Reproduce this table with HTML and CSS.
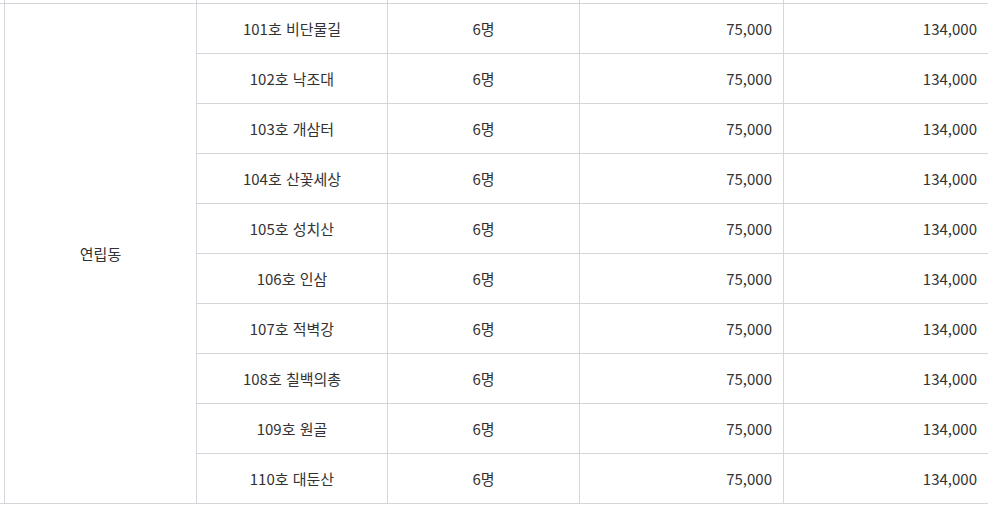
FILE: index.html
```html
<!DOCTYPE html>
<html lang="ko">
<head>
<meta charset="utf-8">
<title>객실 요금표</title>
<link rel="stylesheet" href="styles.css">
</head>
<body>
<div class="grid">
  <div class="cell prev"></div>
  <div class="cell prev"></div>
  <div class="cell prev"></div>
  <div class="cell prev"></div>
  <div class="cell prev"></div>
  <div class="cell prev last"></div>

  <div class="cell lead span"></div>
  <div class="cell group span">연립동</div>

  <div class="cell center">101호 비단물길</div><div class="cell center">6명</div><div class="cell num">75,000</div><div class="cell num last">134,000</div>
  <div class="cell center">102호 낙조대</div><div class="cell center">6명</div><div class="cell num">75,000</div><div class="cell num last">134,000</div>
  <div class="cell center">103호 개삼터</div><div class="cell center">6명</div><div class="cell num">75,000</div><div class="cell num last">134,000</div>
  <div class="cell center">104호 산꽃세상</div><div class="cell center">6명</div><div class="cell num">75,000</div><div class="cell num last">134,000</div>
  <div class="cell center">105호 성치산</div><div class="cell center">6명</div><div class="cell num">75,000</div><div class="cell num last">134,000</div>
  <div class="cell center">106호 인삼</div><div class="cell center">6명</div><div class="cell num">75,000</div><div class="cell num last">134,000</div>
  <div class="cell center">107호 적벽강</div><div class="cell center">6명</div><div class="cell num">75,000</div><div class="cell num last">134,000</div>
  <div class="cell center">108호 칠백의총</div><div class="cell center">6명</div><div class="cell num">75,000</div><div class="cell num last">134,000</div>
  <div class="cell center">109호 원골</div><div class="cell center">6명</div><div class="cell num">75,000</div><div class="cell num last">134,000</div>
  <div class="cell center">110호 대둔산</div><div class="cell center">6명</div><div class="cell num">75,000</div><div class="cell num last">134,000</div>
</div>
</body>
</html>
```
FILE: styles.css
```css
html, body {
  margin: 0;
  padding: 0;
  background: #ffffff;
}

body {
  font-family: "Noto Sans CJK KR", "Noto Sans", sans-serif;
  font-size: 15px;
  color: #333333;
}

.grid {
  display: grid;
  width: 988px;
  grid-template-columns: 5px 192px 191px 192px 204px 204px;
  grid-template-rows: 4px repeat(10, 50px);
}

.cell {
  box-sizing: border-box;
  border-right: 1px solid #d5d5db;
  border-bottom: 1px solid #d5d5db;
  display: flex;
  align-items: center;
  line-height: 1;
}

.cell.last {
  border-right: none;
}

.span {
  grid-row: span 10;
}

.group,
.center {
  justify-content: center;
}

.num {
  justify-content: flex-end;
  padding-right: 11px;
}
```
